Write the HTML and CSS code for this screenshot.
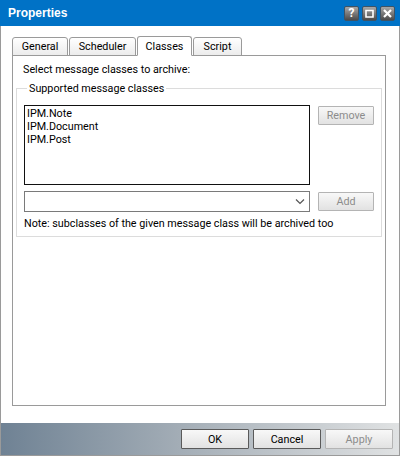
FILE: index.html
```html
<!DOCTYPE html>
<html lang="en">
<head>
    <meta charset="UTF-8">
    <title>Properties</title>
    <link rel="stylesheet" href="styles.css">
</head>
<body>
    <div class="window">
        <div class="titlebar">
            <span class="title">Properties</span>
            <div class="wbtns">
                <div class="wbtn wbtn-help">?</div>
                <div class="wbtn">
                    <svg width="9" height="9" viewBox="0 0 9 9"><path d="M1 1.5h7v6.5h-7z" fill="none" stroke="#fff" stroke-width="1.6"/></svg>
                </div>
                <div class="wbtn">
                    <svg width="9" height="9" viewBox="0 0 9 9"><path d="M1 1l7 7M8 1l-7 7" fill="none" stroke="#fff" stroke-width="2.2"/></svg>
                </div>
            </div>
        </div>
        <div class="content">
            <div class="tabs">
                <div class="tab tab-general">General</div>
                <div class="tab tab-scheduler">Scheduler</div>
                <div class="tab tab-classes active">Classes</div>
                <div class="tab tab-script">Script</div>
            </div>
            <div class="panel">
                <p class="intro">Select message classes to archive:</p>
                <fieldset class="group">
                    <legend>Supported message classes</legend>
                    <div class="row row-list">
                        <div class="listbox">
                            <div>IPM.Note</div>
                            <div>IPM.Document</div>
                            <div>IPM.Post</div>
                        </div>
                        <div class="btn disabled btn-side">Remove</div>
                    </div>
                    <div class="row row-combo">
                        <div class="combo">
                            <svg width="10" height="6" viewBox="0 0 10 6"><path d="M1 .5l4 4 4-4" fill="none" stroke="#555" stroke-width="1.2"/></svg>
                        </div>
                        <div class="btn disabled btn-side">Add</div>
                    </div>
                    <p class="note">Note: subclasses of the given message class will be archived too</p>
                </fieldset>
            </div>
        </div>
        <div class="footer">
            <div class="btn btn-foot">OK</div>
            <div class="btn btn-foot">Cancel</div>
            <div class="btn btn-foot disabled">Apply</div>
        </div>
    </div>
</body>
</html>
```

FILE: styles.css
```css
*{margin:0; padding:0; box-sizing:border-box;}
html,body{
    width: 400px;
    height: 456px;
    overflow: hidden;
    background: #fff;
}
body{
    font-family: Roboto, "Liberation Sans", Arial, sans-serif;
    font-size: 10.75px;
    color: #000;
}
.window{
    display: flex;
    flex-direction: column;
    width: 400px;
    height: 456px;
    border-left: 1px solid #9a9a9a;
    border-right: 1px solid #9a9a9a;
    border-bottom: 1px solid #9a9a9a;
}
.titlebar{
    display: flex;
    justify-content: space-between;
    align-items: flex-start;
    height: 26px;
    margin: 0 -1px;
    padding: 6px 5px 0 8px;
    background: #0072c6;
    color: #fff;
}
.title{
    font-family: "Liberation Sans", Arial, sans-serif;
    font-size: 12px;
    font-weight: bold;
    line-height: 14px;
}
.wbtns{
    display: flex;
    gap: 3px;
}
.wbtn{
    display: flex;
    align-items: center;
    justify-content: center;
    width: 15px;
    height: 15px;
    border: 1px solid #3f5364;
    border-radius: 2px;
    background: linear-gradient(#a8a8a8, #4a4a4a);
    color: #fff;
}
.wbtn-help{
    font-size: 12px;
    font-weight: bold;
    line-height: 13px;
}

.content{
    flex: 1;
    padding: 10px 13px 17px 11px;
    display: flex;
    flex-direction: column;
}
.tabs{
    display: flex;
    align-items: flex-end;
    gap: 1px;
    height: 20px;
    margin-bottom: -1px;
    position: relative;
    z-index: 1;
}
.tab{
    height: 19px;
    padding-top: 2px;
    text-align: center;
    line-height: 14px;
    border: 1px solid #9a9a9a;
    border-radius: 3px 3px 0 0;
    background: linear-gradient(#fff, #ececec);
}
.tab-general{width: 56px;}
.tab-scheduler{width: 67px;}
.tab-classes{width: 55px;}
.tab-script{width: 49px;}
.tab.active{
    height: 20px;
    padding-top: 3px;
    background: #fff;
    border-bottom-color: #fff;
}
.panel{
    flex: 1;
    padding: 6px 3px 0 3px;
    border: 1px solid #9a9a9a;
}
.intro{
    padding-left: 7px;
    line-height: 15px;
}
.group{
    height: 156px;
    margin-top: 4px;
    padding: 0 7px 0 7px;
    border: 1px solid #dcdcdc;
}
.group legend{
    margin-left: 3px;
    padding: 0 2px 0 2px;
    line-height: 15px;
}
.row{
    display: flex;
    justify-content: space-between;
    align-items: flex-start;
}
.row-list{
    margin-top: 9px;
}
.row-combo{
    margin-top: 6px;
}
.listbox{
    width: 286px;
    height: 80px;
    padding: 1px 2px;
    border: 1px solid #111;
    line-height: 13px;
}
.combo{
    display: flex;
    justify-content: flex-end;
    align-items: center;
    width: 286px;
    height: 21px;
    padding-right: 4px;
    border: 1px solid #7a7a7a;
}
.btn{
    display: flex;
    align-items: center;
    justify-content: center;
    border: 1px solid #5a5a5a;
    border-radius: 1px;
    background: linear-gradient(#f8f8f8, #e2e2e2);
}
.btn.disabled{
    color: #8c8c8c;
    border-color: #b4b4b4;
}
.btn-side{
    width: 56px;
    height: 19px;
    margin: 1px 0 0 0;
}
.note{
    margin-top: 4px;
    line-height: 15px;
}

.footer{
    display: flex;
    justify-content: flex-end;
    gap: 4px;
    height: 32px;
    padding: 6px 6px 0 0;
    background: linear-gradient(to right, #6f8294, #a3adb6 45%, #e0e2e3);
}
.btn-foot{
    width: 68px;
    height: 20px;
}
```
